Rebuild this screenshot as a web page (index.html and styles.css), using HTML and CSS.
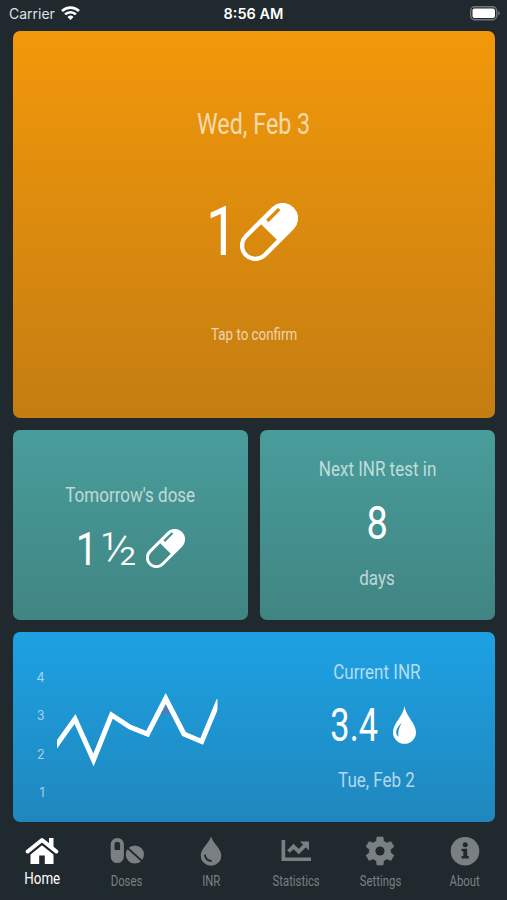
FILE: index.html
```
<!DOCTYPE html>
<html lang="en">
  <head>
    <meta charset="utf-8" />
    <title>Home</title>
    <meta name="viewport" content="width=device-width, initial-scale=1" />
    <link rel="stylesheet" href="styles.css">
  </head>
  <body>
    <!-- shared pill icon -->
    <svg class="symbols">
      <symbol id="pill" viewBox="0 0 58 58">
        <g transform="rotate(45 29 29)">
          <path fill="#fff" fill-rule="evenodd" d="M13.500 9.700a15.500 15.500 0 0 1 31 0v38.600a15.500 15.500 0 0 1-31 0zM17.900 29v19.300a11.100 11.100 0 0 0 22.200 0V29z" />
          <path fill="none" stroke="currentColor" stroke-width="3.400" d="M20 5.500v17" />
        </g>
      </symbol>
    </svg>

    <header class="status">
      <div class="carrier">
        Carrier
        <svg width="19" height="16" viewBox="0 -1 19 16" fill="none" stroke="#fff" stroke-width="2.700">
          <path d="M1 5a12.300 12.300 0 0 1 17 0M4.100 8.400a7.800 7.800 0 0 1 10.800 0" />
          <path d="M9.500 13.900L6.500 11a4.300 4.300 0 0 1 6 0z" fill="#fff" stroke="none" />
        </svg>
      </div>
      <div class="time">8:56 AM</div>
      <svg class="battery" width="30" height="15" viewBox="0 0 30 15">
        <rect x=".7" y=".7" width="26" height="13" rx="4" fill="none" stroke="#717779" stroke-width="1.400" />
        <rect x="2.500" y="2.500" width="22.500" height="9.500" rx="2" fill="#fff" />
        <path d="M28.200 5v4.600q1.500-.6 1.500-2.300T28.200 5z" fill="#717779" />
      </svg>
    </header>

    <main class="cards">
      <section class="card today">
        <p class="date"><span>Wed, Feb 3</span></p>
        <div class="dose">
          <span class="num">1</span>
          <svg width="58" height="58"><use href="#pill" /></svg>
        </div>
        <p class="tap"><span>Tap to confirm</span></p>
      </section>

      <section class="card tomorrow">
        <p><span>Tomorrow's dose</span></p>
        <div class="dose">
          <span class="num one">1</span>
          <span class="num half">½</span>
          <svg width="39" height="39"><use href="#pill" /></svg>
        </div>
      </section>

      <section class="card next">
        <p><span>Next INR test in</span></p>
        <div class="dose"><span class="num">8</span></div>
        <p><span>days</span></p>
      </section>

      <section class="card inr">
        <svg class="chart" width="222" height="190" viewBox="0 0 222 190">
          <g class="axis" text-anchor="end">
            <text x="31.5" y="50">4</text>
            <text x="31.5" y="88">3</text>
            <text x="31.5" y="126.500">2</text>
            <text x="31.5" y="164.500">1</text>
          </g>
          <path fill="#4b7fb4" d="M152.700 66l-8 16h16zM204.500 70v12.500h-5z" />
          <svg x="44" width="160.500" height="190" viewBox="44 0 160.500 190">
            <polyline fill="none" stroke="#fff" stroke-width="5" stroke-miterlimit="10"
              points="42,115 62,87 80.500,128 98.500,83 117,95 134.500,102 152.700,66.500 171,102 188.700,109.500 206,68" />
          </svg>
        </svg>
        <div class="current">
          <p><span>Current INR</span></p>
          <div class="dose">
            <span class="num">3.4</span>
            <svg width="23" height="38" viewBox="0 0 23 38">
              <path fill="#fff" d="M11.500 0C12.600 10 23 17 23 26.300a11.500 11.500 0 0 1-23 0C0 17 10.400 10 11.500 0z" />
              <path fill="#1c91cc" d="M9 16.500C5.500 20 3 23 3.200 26.500c0 2 1 3.500 2.300 4.300C4.500 26 6.500 20.500 9 16.500z" />
            </svg>
          </div>
          <p><span>Tue, Feb 2</span></p>
        </div>
      </section>
    </main>

    <nav class="tabs">
      <a class="tab active">
        <svg width="34" height="30" viewBox="0 0 34 30">
          <path d="M2.700 15.500L17 4l14.300 11.500" fill="none" stroke="currentColor" stroke-width="4" stroke-linecap="round" stroke-linejoin="round" />
          <path d="M24 2h4.500v10L24 8.500zM17 9.300l11.500 9.200V28h-8.700v-8.500h-5.600V28H5.500v-9.500z" />
          <path d="M4 18.400L17 8l13 10.400" fill="none" stroke="#20292d" stroke-width="1.300" />
        </svg>
        <span>Home</span>
      </a>
      <a class="tab">
        <svg width="34" height="30" viewBox="0 0 34 30">
          <path fill-rule="evenodd" d="M.7 8.500a6.600 6.600 0 0 1 13.200 0v12a6.600 6.600 0 0 1-13.200 0zM4.500 8.500V14h5.600V8.500a2.800 2.800 0 0 0-5.600 0z" />
          <circle cx="24.900" cy="18.500" r="9.100" />
          <path d="M17 11.500L32 25" stroke="#20292d" stroke-width="1.700" />
        </svg>
        <span>Doses</span>
      </a>
      <a class="tab">
        <svg width="34" height="30" viewBox="0 0 34 30">
          <path d="M17 .2C18.500 7 27.300 12 27.300 19.800a10.300 10 0 0 1-20.600 0C6.700 12 15.500 7 17 .2z" />
          <path d="M11 19.500q1 5 6 5.500" fill="none" stroke="#20292d" stroke-width="1.800" stroke-linecap="round" />
        </svg>
        <span>INR</span>
      </a>
      <a class="tab">
        <svg width="34" height="30" viewBox="0 0 34 30">
          <path d="M2.500 4h3.700v17.500H32V25H2.500z" />
          <path d="M9.500 15.500l5-5 5.300 5.200 6.500-6.500" fill="none" stroke="currentColor" stroke-width="3.800" />
          <path d="M21 5.500h9V14.500z" />
        </svg>
        <span>Statistics</span>
      </a>
      <a class="tab">
        <svg width="34" height="30" viewBox="-17 -15 34 30">
          <path d="M-3-14H3l.7 4.200 3.200 1.900 4-1.600 3 5.200L10.600-1.700v3.400l3.300 2.600-3 5.200-4-1.600-3.200 1.900L3 14h-6l-.7-4.200-3.200-1.900-4 1.600-3-5.200 3.300-2.600v-3.400l-3.300-2.600 3-5.200 4 1.600 3.200-1.900z" stroke="currentColor" stroke-width=".6" stroke-linejoin="round" />
          <circle r="4.600" fill="#20292d" />
        </svg>
        <span>Settings</span>
      </a>
      <a class="tab">
        <svg width="34" height="30" viewBox="0 0 34 30">
          <circle cx="17" cy="15.200" r="14.300" />
          <circle cx="17.200" cy="8.800" r="2.500" fill="#20292d" />
          <path fill="#20292d" d="M13.500 12.700h5.700v7.300h1.600v2.500h-7.300V20h1.800v-4.800h-1.800z" />
        </svg>
        <span>About</span>
      </a>
    </nav>
  </body>
</html>
```
FILE: styles.css
```
* {
  box-sizing: border-box;
}

body {
  margin: 0;
  height: 900px;
  overflow: hidden;
  background-color: #20292d;
  color: white;
  font-family: Roboto, "Liberation Sans", sans-serif;
  display: flex;
  flex-direction: column;
}

.symbols {
  display: none;
}

svg {
  display: block;
  flex-shrink: 0;
}

.status {
  height: 31px;
  padding: 0 7px 4px 9px;
  display: grid;
  grid-template-columns: 1fr auto 1fr;
  align-items: center;
  font-family: Inter, sans-serif;
  font-size: 14px;
}

.carrier {
  display: flex;
  gap: 6px;
  color: #dfe1e2;
}

.time {
  padding-right: 2px;
  font-weight: 600;
  font-size: 14.5px;
}

.battery {
  justify-self: end;
}

.cards {
  height: 791px;
  padding: 0 12.5px 0 13px;
  display: grid;
  grid-template-columns: 1fr 1fr;
  grid-template-rows: 386.5px 190px 190px;
  gap: 12.2px 12.5px;
}

.card {
  border-radius: 7px;
  display: flex;
  flex-direction: column;
  align-items: center;
  overflow: hidden;
}

/* the labels use a narrow face */
p {
  margin: 0;
  font-size: 21px;
  line-height: 26px;
  white-space: nowrap;
  color: rgba(255, 255, 255, 0.67);
}

p span,
.num,
.tab span {
  display: inline-block;
  transform: scaleX(0.81);
}

.dose {
  display: flex;
  align-items: center;
  justify-content: center;
}

.num {
  font-size: 47px;
  line-height: 50px;
  text-align: center;
  white-space: nowrap;
}

.today {
  grid-column: 1 / 3;
  padding-top: 75px;
  color: #dd8b0c;
  background: linear-gradient(#f2980a, #c47d12);
}

.today .date {
  font-size: 29.5px;
  line-height: 36px;
}

.today .date span {
  transform: scaleX(0.79);
}

.today .dose {
  height: 60px;
  margin-top: 60px;
}

.today .num {
  width: 32px;
  margin-right: 5px;
  margin-left: -6px;
  font-size: 69px;
  color: white;
}

.today .tap {
  margin-top: 60px;
  font-size: 16.5px;
}

.tomorrow,
.next {
  background: linear-gradient(#489d9b, #408583);
}

.tomorrow {
  padding-top: 52px;
  color: #429090;
}

.tomorrow .dose {
  margin-top: 16px;
}

.tomorrow .num {
  color: white;
}

.tomorrow .one {
  width: 20px;
  margin-right: 2px;
  margin-left: -2px;
}

.tomorrow .half {
  width: 50px;
  padding-right: 4px;
  font-weight: 300;
  transform: scaleX(1.03);
}

.next {
  padding-top: 26px;
}

.next .dose {
  height: 50px;
  margin: 16px 0 17px;
}

.inr {
  grid-column: 1 / 3;
  flex-direction: row;
  justify-content: space-between;
  background: linear-gradient(#1da1e3, #1f87bd);
}

.axis {
  font-family: Inter, sans-serif;
  font-size: 12.5px;
  fill: rgba(255, 255, 255, 0.6);
}

.current {
  width: 236px;
  padding-bottom: 2px;
  display: flex;
  flex-direction: column;
  align-items: center;
}

.current .dose {
  height: 50px;
  margin: 15px 0 17px;
  padding-right: 15px;
}

.current .num {
  width: 62px;
  margin-right: 9px;
  transform: scaleX(0.73);
}

.tabs {
  flex: 1;
  padding-top: 14px;
  display: grid;
  grid-template-columns: repeat(6, 1fr);
}

.tab {
  display: flex;
  flex-direction: column;
  align-items: center;
  gap: 6px;
  color: #7a8082;
  fill: currentColor;
  font-size: 14px;
  line-height: 18px;
}

.active {
  color: white;
  gap: 3px;
  font-size: 16.5px;
  line-height: 20px;
}
```
